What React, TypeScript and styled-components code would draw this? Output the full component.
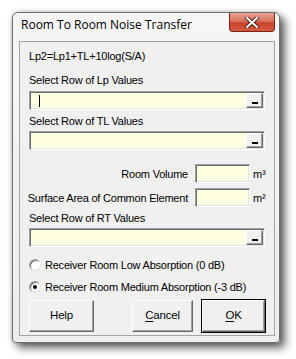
import React from 'react';
import styled, { createGlobalStyle } from 'styled-components';

const GlobalStyle = createGlobalStyle`
    html, body {
        margin: 0;
        padding: 0;
        background: #ffffff;
    }
    body {
        font-family: "Liberation Sans", Arial, sans-serif;
        font-size: 11px;
        letter-spacing: -0.22px;
        color: #000;
    }
`;

const Page = styled.div`
    width: 296px;
    height: 359px;
    padding: 12px 0 0 12px;
    box-sizing: border-box;
    overflow: hidden;
`;

const Window = styled.div`
    width: 268px;
    height: 331px;
    box-sizing: border-box;
    border: 1px solid #6f6f6f;
    border-radius: 6px 6px 4px 4px;
    background: linear-gradient(#f6f6f6, #ededed);
    box-shadow: 5px 5px 9px rgba(0, 0, 0, 0.6), 0 0 5px rgba(0, 0, 0, 0.25);
    display: flex;
    flex-direction: column;
    padding: 0 4px 6px 6px;
`;

const TitleBar = styled.div`
    height: 28px;
    display: flex;
    align-items: flex-start;
    justify-content: space-between;
`;

const Title = styled.span`
    font-family: "Open Sans", "Noto Sans", sans-serif;
    font-size: 12px;
    letter-spacing: 0;
    line-height: 16px;
    padding-left: 2px;
    padding-top: 4px;
    color: #000;
`;

const CloseButton = styled.div`
    width: 46px;
    height: 19px;
    box-sizing: border-box;
    border: 1px solid #7a2418;
    border-top: none;
    border-radius: 0 0 4px 4px;
    background: linear-gradient(#e8a492 0%, #d9735e 45%, #c7442c 55%, #d45a3f 100%);
    display: flex;
    align-items: center;
    justify-content: center;
    svg {
        width: 14px;
        height: 11px;
    }
`;

const Client = styled.div`
    flex: 1;
    box-sizing: border-box;
    border: 1px solid #a4a4a4;
    background: #f0f0f0;
    padding: 7px 9px 0 9px;
    display: flex;
    flex-direction: column;
`;

const Text = styled.div<{ $top?: number }>`
    height: 15px;
    line-height: 15px;
    margin-top: ${p => p.$top ?? 0}px;
    white-space: nowrap;
`;

const Field = styled.div<{ $top?: number }>`
    height: 19px;
    margin-top: ${p => p.$top ?? 0}px;
    box-sizing: border-box;
    border-style: solid;
    border-width: 1px;
    border-color: #a0a0a0 #ffffff #ffffff #a0a0a0;
    box-shadow: inset 1px 1px 0 #696969, inset -1px -1px 0 #e3e3e3;
    background: #ffffe1;
    display: flex;
    align-items: stretch;
    flex-shrink: 0;
`;

const FieldText = styled.div`
    flex: 1;
    padding-left: 9px;
    display: flex;
    align-items: center;
`;

const Caret = styled.span`
    width: 1px;
    height: 12px;
    background: #000;
`;

const PickButton = styled.div`
    width: 17px;
    margin: 1px 1px 1px 0;
    box-sizing: border-box;
    background: #f0f0f0;
    border-style: solid;
    border-width: 1px;
    border-color: #ffffff #696969 #696969 #ffffff;
    box-shadow: inset -1px -1px 0 #a0a0a0;
    display: flex;
    align-items: flex-end;
    justify-content: center;
    padding-bottom: 3px;
    &::after {
        content: '';
        width: 6px;
        height: 2px;
        background: #000;
    }
`;

const ValueRow = styled.div<{ $top?: number }>`
    display: flex;
    align-items: center;
    height: 19px;
    margin-top: ${p => p.$top ?? 0}px;
    justify-content: flex-end;
`;

const ValueLabel = styled.span`
    margin-right: 7px;
    white-space: nowrap;
`;

const SmallField = styled(Field)`
    width: 55px;
    margin-top: 0;
`;

const Unit = styled.span`
    width: 15px;
    flex-shrink: 0;
    padding-left: 3px;
    box-sizing: border-box;
`;

const RadioRow = styled.div<{ $top?: number }>`
    display: flex;
    align-items: center;
    height: 16px;
    margin-top: ${p => p.$top ?? 0}px;
    gap: 4px;
`;

const RadioCircle = styled.span<{ $checked?: boolean }>`
    width: 12px;
    height: 12px;
    box-sizing: border-box;
    border-radius: 50%;
    background: #fff;
    border: 1px solid;
    border-color: #a0a0a0 #e3e3e3 #e3e3e3 #a0a0a0;
    box-shadow: inset 1px 1px 0 #696969;
    display: flex;
    align-items: center;
    justify-content: center;
    &::after {
        content: '';
        width: 4px;
        height: 4px;
        border-radius: 50%;
        background: ${p => (p.$checked ? '#000' : 'transparent')};
    }
`;

const ButtonRow = styled.div`
    display: flex;
    margin-top: 5px;
    height: 32px;
`;

const Button = styled.div<{ $width: number; $gap?: number; $default?: boolean }>`
    width: ${p => p.$width}px;
    margin-left: ${p => p.$gap ?? 0}px;
    box-sizing: border-box;
    background: #f0f0f0;
    border-style: solid;
    border-width: 1px;
    border-color: #ffffff #696969 #696969 #ffffff;
    box-shadow: inset -1px -1px 0 #a0a0a0, ${p => (p.$default ? '0 0 0 1px #000' : '0 0 0 0 transparent')};
    display: flex;
    align-items: center;
    justify-content: center;
    font-size: 11.5px;
    padding-bottom: 2px;
    u {
        text-decoration-thickness: 1px;
        text-underline-offset: 2px;
    }
`;

export default function App() {
    return (
        <Page>
            <GlobalStyle />
            <Window>
                <TitleBar>
                    <Title>Room To Room Noise Transfer</Title>
                    <CloseButton>
                        <svg viewBox="0 0 14 11">
                            <path
                                d="M2 1 L12 10 M12 1 L2 10"
                                stroke="#4a1a12"
                                strokeWidth="4"
                                strokeLinecap="round"
                            />
                            <path
                                d="M2 1 L12 10 M12 1 L2 10"
                                stroke="#ffffff"
                                strokeWidth="2.2"
                                strokeLinecap="round"
                            />
                        </svg>
                    </CloseButton>
                </TitleBar>
                <Client>
                    <Text>Lp2=Lp1+TL+10log(S/A)</Text>
                    <Text $top={9}>Select Row of Lp Values</Text>
                    <Field $top={3}>
                        <FieldText>
                            <Caret />
                        </FieldText>
                        <PickButton />
                    </Field>
                    <Text $top={4}>Select Row of TL Values</Text>
                    <Field $top={2}>
                        <FieldText />
                        <PickButton />
                    </Field>
                    <ValueRow $top={14}>
                        <ValueLabel>Room Volume</ValueLabel>
                        <SmallField />
                        <Unit>m³</Unit>
                    </ValueRow>
                    <ValueRow $top={5}>
                        <ValueLabel>Surface Area of Common Element</ValueLabel>
                        <SmallField />
                        <Unit>m²</Unit>
                    </ValueRow>
                    <Text $top={4}>Select Row of RT Values</Text>
                    <Field $top={2}>
                        <FieldText />
                        <PickButton />
                    </Field>
                    <RadioRow $top={10}>
                        <RadioCircle />
                        <span>Receiver Room Low Absorption (0 dB)</span>
                    </RadioRow>
                    <RadioRow $top={6}>
                        <RadioCircle $checked />
                        <span>Receiver Room Medium Absorption (-3 dB)</span>
                    </RadioRow>
                    <ButtonRow>
                        <Button $width={66}>Help</Button>
                        <Button $width={62} $gap={38}>
                            <span>
                                <u>C</u>ancel
                            </span>
                        </Button>
                        <Button $width={64} $gap={9} $default>
                            <span>
                                <u>O</u>K
                            </span>
                        </Button>
                    </ButtonRow>
                </Client>
            </Window>
        </Page>
    );
}
